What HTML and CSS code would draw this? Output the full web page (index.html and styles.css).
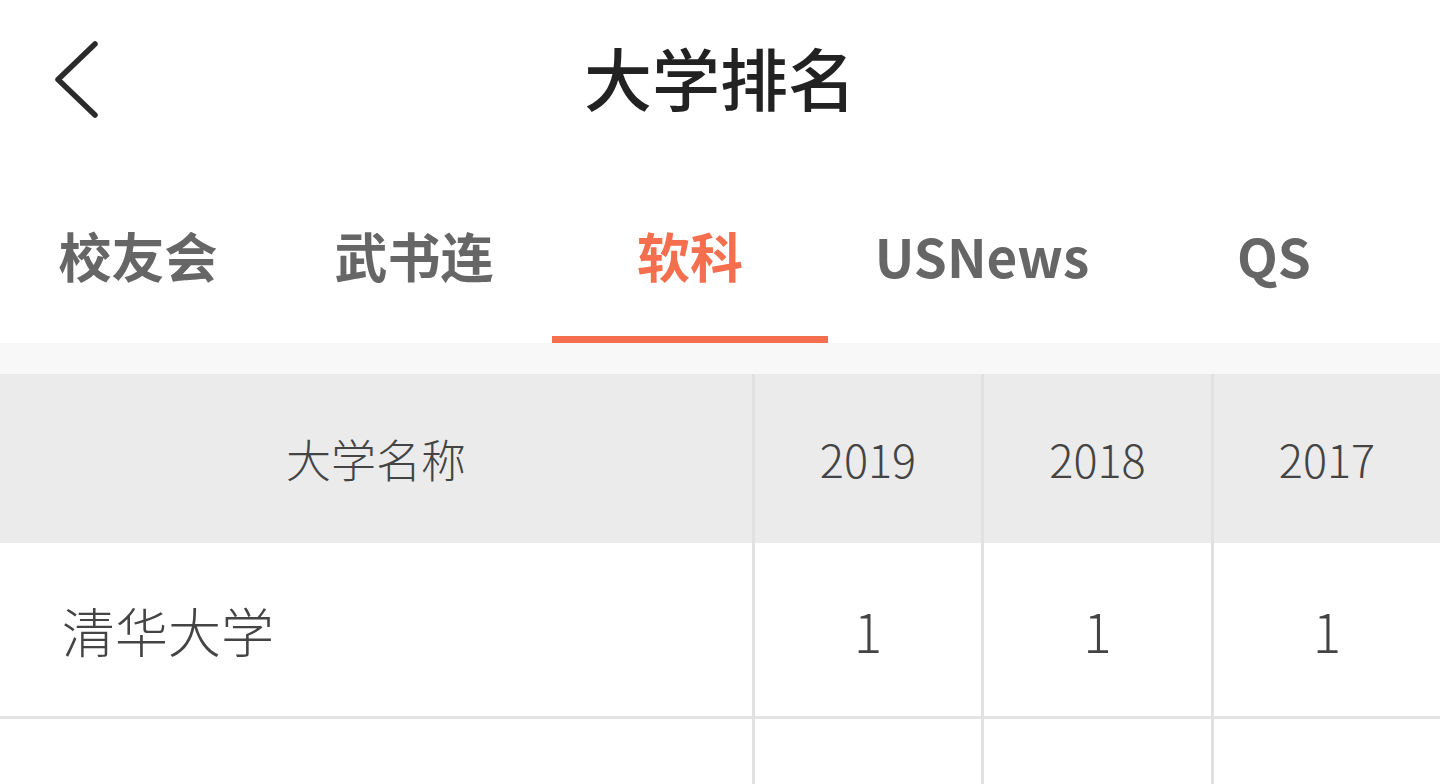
FILE: index.html
```html
<!DOCTYPE html>
<html lang="zh">
<head>
<meta charset="utf-8">
<title>大学排名</title>
<link rel="stylesheet" href="styles.css">
</head>
<body>
<header class="topbar">
  <span class="back">
    <svg width="60" height="90" viewBox="0 0 60 90">
      <polyline points="42,8 5,43.5 42,79" fill="none" stroke="#2b2b2b" stroke-width="5.5" stroke-linecap="round" stroke-linejoin="round"/>
    </svg>
  </span>
  <h1 class="title">大学排名</h1>
</header>
<nav class="tabs">
  <div class="tab">校友会</div>
  <div class="tab">武书连</div>
  <div class="tab active">软科</div>
  <div class="tab wide">USNews</div>
  <div class="tab">QS</div>
</nav>
<div class="gap"></div>
<div class="table">
  <div class="row head">
    <div class="cell name">大学名称</div>
    <div class="cell num">2019</div>
    <div class="cell num">2018</div>
    <div class="cell num">2017</div>
  </div>
  <div class="row body">
    <div class="cell name left">清华大学</div>
    <div class="cell num">1</div>
    <div class="cell num">1</div>
    <div class="cell num">1</div>
  </div>
  <div class="row body">
    <div class="cell name left"></div>
    <div class="cell num"></div>
    <div class="cell num"></div>
    <div class="cell num"></div>
  </div>
</div>
</body>
</html>
```
FILE: styles.css
```css
html, body {
  margin: 0;
  padding: 0;
  background: #ffffff;
  font-family: "Noto Sans CJK SC", "Noto Sans", sans-serif;
  overflow: hidden;
}
.topbar {
  position: relative;
  height: 165px;
  display: flex;
  align-items: center;
  justify-content: center;
  padding-bottom: 12px;
  box-sizing: border-box;
}
.back {
  position: absolute;
  left: 53px;
  top: 36px;
  width: 60px;
  height: 90px;
}
.title {
  margin: 0;
  font-size: 68px;
  font-weight: 500;
  color: #222222;
  line-height: 1;
}
.tabs {
  height: 178px;
  display: flex;
  align-items: stretch;
}
.tab {
  width: 276px;
  flex: none;
  display: flex;
  align-items: center;
  justify-content: center;
  font-size: 53px;
  font-weight: 700;
  color: #666666;
  padding-top: 8px;
  box-sizing: border-box;
  border-bottom: 7px solid transparent;
}
.tab.wide {
  width: 308px;
}
.tab.active {
  color: #f56e4e;
  border-bottom-color: #f56e4e;
}
.gap {
  height: 31px;
  background: #f8f8f8;
}
.row {
  display: grid;
  grid-template-columns: 752px 229px 230px 229px;
}
.row.head {
  height: 169px;
  background: #ebebeb;
}
.row.body {
  height: 173px;
  border-bottom: 3px solid #e3e3e3;
  background: #ffffff;
}
.cell {
  display: flex;
  align-items: center;
  justify-content: center;
  color: #444444;
  font-weight: 300;
}
.head .cell {
  font-size: 45px;
}
.body .cell {
  font-size: 53px;
}
.cell.num {
  border-left: 3px solid #e1e1e1;
}
.cell.left {
  justify-content: flex-start;
  padding-left: 62px;
}
```
